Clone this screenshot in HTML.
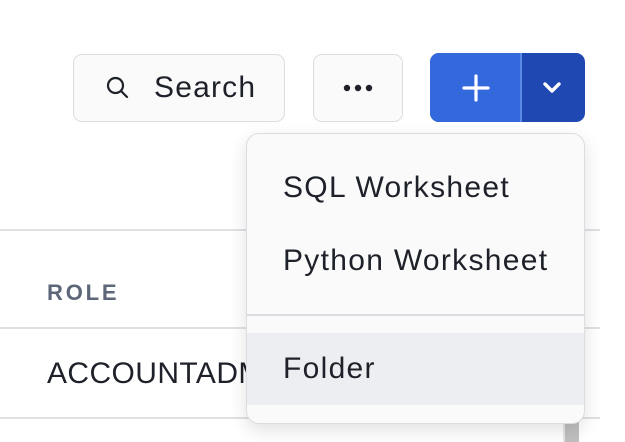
<!DOCTYPE html>
<html><head><meta charset="utf-8"><style>
*{box-sizing:border-box;margin:0;padding:0}
body{width:625px;height:442px;background:#fff;position:relative;overflow:hidden;font-family:"Liberation Sans",sans-serif;color:#1e2129}
.btn{position:absolute;top:54px;height:68px;border:1.5px solid #dcdde1;border-radius:9px;background:#fafafa}
.line{position:absolute;left:0;height:2px;background:#dfe0e4;width:600px}
.item{position:absolute;left:0;width:100%;height:72px;line-height:72px;padding-left:36px;font-size:30px;letter-spacing:1.3px;white-space:nowrap}
</style></head><body>
<div class="btn" style="left:73px;width:212px">
 <svg style="position:absolute;left:31px;top:20px" width="26" height="26" viewBox="0 0 26 26"><circle cx="10.5" cy="10.5" r="7.5" fill="none" stroke="#1e2129" stroke-width="2.2"/><line x1="16" y1="16" x2="22" y2="22" stroke="#1e2129" stroke-width="2.2" stroke-linecap="round"/></svg>
 <span style="position:absolute;left:80px;top:16px;font-size:30px;letter-spacing:1.2px">Search</span>
</div>
<div class="btn" style="left:313px;width:90px">
 <svg style="position:absolute;left:29px;top:29px" width="30" height="8"><circle cx="4" cy="4" r="3.2" fill="#1e2129"/><circle cx="15" cy="4" r="3.2" fill="#1e2129"/><circle cx="26" cy="4" r="3.2" fill="#1e2129"/></svg>
</div>
<div style="position:absolute;left:430px;top:53px;width:155px;height:69px;border-radius:9px;overflow:hidden;background:#1f48b2">
 <div style="position:absolute;left:0;top:0;width:90px;height:69px;background:#3369dc"></div>
 <div style="position:absolute;left:90px;top:0;width:2px;height:69px;background:#5b8ae6"></div>
 <svg style="position:absolute;left:32px;top:21px" width="28" height="28"><line x1="14" y1="2" x2="14" y2="26" stroke="#fff" stroke-width="3.2" stroke-linecap="round"/><line x1="2" y1="14" x2="26" y2="14" stroke="#fff" stroke-width="3.2" stroke-linecap="round"/></svg>
 <svg style="position:absolute;left:112px;top:28px" width="20" height="14"><polyline points="3,3 10,10 17,3" fill="none" stroke="#fff" stroke-width="3.4" stroke-linecap="round" stroke-linejoin="round"/></svg>
</div>
<div class="line" style="top:229px"></div>
<div style="position:absolute;left:47px;top:280px;font-size:22px;font-weight:bold;color:#5d6779;letter-spacing:2.8px">ROLE</div>
<div class="line" style="top:327px"></div>
<div style="position:absolute;left:47px;top:357px;font-size:30px;white-space:nowrap;letter-spacing:0.4px">ACCOUNTADMIN</div>
<div class="line" style="top:417px"></div>
<div style="position:absolute;left:563px;top:420px;width:16px;height:22px;background:#bfbfbf;border-left:2px solid #e6e6e6"></div>
<div style="position:absolute;left:246px;top:133px;width:339px;height:291px;border:1.5px solid #dcdde1;border-radius:13px;background:#fafafb;box-shadow:0 6px 18px rgba(0,0,0,0.12);overflow:hidden">
 <div class="item" style="top:18px">SQL Worksheet</div>
 <div class="item" style="top:91px">Python Worksheet</div>
 <div style="position:absolute;left:0;top:180px;width:100%;height:2px;background:#dadbe0"></div>
 <div class="item" style="top:199px;background:#eceef1">Folder</div>
</div>
</body></html>
